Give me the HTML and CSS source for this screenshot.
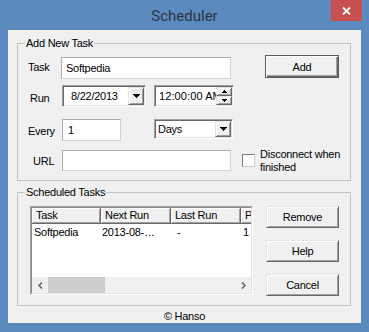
FILE: index.html
```html
<!DOCTYPE html>
<html>
<head>
<meta charset="utf-8">
<link rel="stylesheet" href="styles.css">
</head>
<body>
<div class="window">
  <div class="titlebar">
    <span class="title">Scheduler</span>
    <span class="close"><svg width="9" height="8" viewBox="0 0 9 8"><path d="M1 0.5 L8 7.5 M8 0.5 L1 7.5" stroke="#fff" stroke-width="1.8" fill="none"/></svg></span>
  </div>
  <div class="client">
    <fieldset class="group g1">
      <legend>Add New Task</legend>
      <div class="row r1">
        <span class="lbl l-task">Task</span>
        <div class="textbox tb-task">Softpedia</div>
        <div class="btn btn-default btn-add">Add</div>
      </div>
      <div class="row r2">
        <span class="lbl l-run">Run</span>
        <div class="sunken dtp">
          <span class="val v-date">8/22/2013</span>
          <span class="raised ddbtn"><svg width="7" height="4" viewBox="0 0 7 4"><path d="M0 0H7V1H6V2H5V3H4V4H3V3H2V2H1V1H0Z" fill="#000"/></svg></span>
        </div>
        <div class="sunken dtp time">
          <span class="val v-time">12:00:00 AM</span>
          <span class="spin">
            <span class="raised spinbtn"><svg width="5" height="3" viewBox="0 0 5 3"><path d="M2 0H3V1H4V2H5V3H0V2H1V1H2Z" fill="#000"/></svg></span>
            <span class="raised spinbtn"><svg width="5" height="3" viewBox="0 0 5 3"><path d="M0 0H5V1H4V2H3V3H2V2H1V1H0Z" fill="#000"/></svg></span>
          </span>
        </div>
      </div>
      <div class="row r3">
        <span class="lbl l-every">Every</span>
        <div class="textbox tb-every">1</div>
        <div class="sunken combo">
          <span class="val v-days">Days</span>
          <span class="raised ddbtn"><svg width="7" height="4" viewBox="0 0 7 4"><path d="M0 0H7V1H6V2H5V3H4V4H3V3H2V2H1V1H0Z" fill="#000"/></svg></span>
        </div>
      </div>
      <div class="row r4">
        <span class="lbl l-url">URL</span>
        <div class="textbox tb-url"></div>
        <span class="checkbox"></span>
        <span class="checklbl">Disconnect when<br>finished</span>
      </div>
    </fieldset>
    <fieldset class="group g2">
      <legend>Scheduled Tasks</legend>
      <div class="tasks">
        <div class="list">
          <div class="list-inner">
            <div class="lhead">
              <span class="hc c1">Task</span>
              <span class="hc c2">Next Run</span>
              <span class="hc c3">Last Run</span>
              <span class="hc c4">Period</span>
            </div>
            <div class="lbody">
              <div class="lrow">
                <span class="cell c1">Softpedia</span>
                <span class="cell c2 cnext">2013-08-…</span>
                <span class="cell c3 clast">-</span>
                <span class="cell c4">1</span>
              </div>
            </div>
            <div class="hscroll">
              <span class="sarrow"><svg width="5" height="7" viewBox="0 0 5 7"><polyline points="4,0.5 1,3.5 4,6.5" fill="none" stroke="#606060" stroke-width="1.5"/></svg></span>
              <span class="thumb"></span>
              <span class="track"></span>
              <span class="sarrow"><svg width="5" height="7" viewBox="0 0 5 7"><polyline points="1,0.5 4,3.5 1,6.5" fill="none" stroke="#606060" stroke-width="1.5"/></svg></span>
            </div>
          </div>
        </div>
        <div class="btncol">
          <div class="btn">Remove</div>
          <div class="btn">Help</div>
          <div class="btn">Cancel</div>
        </div>
      </div>
    </fieldset>
    <div class="footer">© Hanso</div>
  </div>
</div>
</body>
</html>
```
FILE: styles.css
```css
body {
  margin: 0;
  font-family: "Liberation Sans", Arial, sans-serif;
  font-size: 11px;
  letter-spacing: -0.25px;
  color: #000;
}
.window {
  width: 369px;
  height: 332px;
  background: #5b8bbe;
  display: flex;
  flex-direction: column;
}
.titlebar {
  height: 30px;
  display: grid;
  grid-template-columns: 1fr auto 1fr;
  align-items: start;
}
.title {
  grid-column: 2;
  font-family: Roboto, "Open Sans", sans-serif;
  font-size: 15px;
  letter-spacing: 0;
  line-height: 30px;
  padding-top: 1px;
  color: #2d3540;
}
.close {
  grid-column: 3;
  justify-self: end;
  margin-right: 7px;
  width: 31px;
  height: 21px;
  background: #c75050;
  display: flex;
  align-items: center;
  justify-content: center;
}
.client {
  margin: 0 8px;
  width: 353px;
  height: 293px;
  background: #f0f0f0;
  display: flex;
  flex-direction: column;
}
.group {
  margin: 7px 10px 0 9px;
  padding: 0 0 9px 7px;
  border: 1px solid #c4c4c4;
  min-width: 0;
}
.group legend {
  padding: 0 1px;
  font-size: 11px;
  line-height: 13px;
}
.g2 {
  margin-top: 5px;
  padding-bottom: 9px;
}
.row {
  display: flex;
  align-items: flex-start;
}
.lbl {
  line-height: 22px;
  flex: none;
}
.r1 { margin-top: 5px; }
.r2 { margin-top: 6px; }
.r3 { margin-top: 10px; }
.r4 { margin-top: 8px; height: 21px; }

.l-task { margin: 1px 0 0 3px; width: 33px; }
.l-run { margin: 2px 0 0 5px; width: 32px; }
.l-every { margin: 1px 0 0 3px; width: 34px; }
.l-url { margin: 0 0 0 8px; width: 29px; }

.textbox {
  box-sizing: border-box;
  height: 22px;
  background: #fff;
  border: 1px solid #acacac;
  border-right-color: #d4d4d4;
  border-bottom-color: #d4d4d4;
  padding-left: 4px;
  line-height: 20px;
  flex: none;
}
.tb-task { width: 170px; margin-top: 2px; }
.tb-every { width: 59px; padding-left: 5px; }
.tb-url { width: 169px; height: 21px; }

.raised {
  box-sizing: border-box;
  background: #f0f0f0;
  border: 1px solid;
  border-color: #e3e3e3 #696969 #696969 #e3e3e3;
  box-shadow: inset 1px 1px #fff, inset -1px -1px #a0a0a0;
}
.sunken {
  box-sizing: border-box;
  background: #fff;
  border: 1px solid;
  border-color: #a0a0a0 #fff #fff #a0a0a0;
  box-shadow: inset 1px 1px #696969, inset -1px -1px #e3e3e3;
  padding: 1px;
  display: flex;
  flex: none;
}
.dtp { width: 84px; height: 22px; }
.dtp.time { width: 80px; margin-left: 8px; }
.val {
  flex: 1;
  min-width: 0;
  overflow: hidden;
  white-space: nowrap;
  line-height: 18px;
}
.v-date { padding-left: 7px; }
.v-time { padding-left: 3px; letter-spacing: 0.1px; }
.v-days { padding-left: 2px; line-height: 16px; }
.ddbtn {
  width: 16px;
  flex: none;
  display: flex;
  align-items: center;
  justify-content: center;
}
.ddbtn svg, .spinbtn svg { display: block; }
.spin {
  width: 16px;
  flex: none;
  display: flex;
  flex-direction: column;
}
.spinbtn {
  flex: 1;
  display: flex;
  align-items: center;
  justify-content: center;
}
.combo { width: 79px; height: 20px; margin-left: 33px; }

.checkbox {
  flex: none;
  box-sizing: border-box;
  width: 13px;
  height: 13px;
  margin: 4px 0 0 11px;
  background: #fff;
  border: 1px solid;
  border-color: #7a7a7a #c8c8c8 #c8c8c8 #7a7a7a;
}
.checklbl {
  margin: -2px 0 0 5px;
  line-height: 13px;
  white-space: nowrap;
}

.btn {
  box-sizing: border-box;
  width: 73px;
  height: 22px;
  display: flex;
  align-items: center;
  justify-content: center;
  background: #f0f0f0;
  border: 1px solid;
  border-color: #e3e3e3 #696969 #696969 #e3e3e3;
  box-shadow: inset 1px 1px #fff, inset -1px -1px #a0a0a0;
  flex: none;
}
.btn-default {
  border-color: #5a5a5a;
  box-shadow: inset 1px 1px #fff, inset -1px -1px #696969, inset -2px -2px #a0a0a0;
}
.btn-add { width: 74px; height: 23px; margin-left: 34px; }

.tasks {
  display: flex;
  align-items: flex-start;
  margin-top: 7px;
}
.list {
  box-sizing: border-box;
  width: 223px;
  height: 89px;
  margin-left: 5px;
  border: 1px solid;
  border-color: #a0a0a0 #fff #fff #a0a0a0;
  background: #fff;
  display: flex;
  flex: none;
}
.list-inner {
  flex: 1;
  min-width: 0;
  border: 1px solid;
  border-color: #8c8c8c #e3e3e3 #e3e3e3 #8c8c8c;
  display: flex;
  flex-direction: column;
  overflow: hidden;
}
.lhead {
  display: flex;
  height: 16px;
  flex: none;
}
.hc {
  flex: none;
  box-sizing: border-box;
  height: 16px;
  padding-left: 4px;
  line-height: 15px;
  white-space: nowrap;
  overflow: hidden;
  background: #f0f0f0;
  border-right: 1px solid #696969;
  border-bottom: 1px solid #696969;
  box-shadow: inset 1px 1px #fff, inset -1px -1px #a0a0a0;
}
.c1 { width: 69px; }
.c2 { width: 70px; }
.c3 { width: 70px; }
.c4 { width: 40px; }
.lbody { flex: 1; }
.lrow {
  display: flex;
  height: 16px;
  line-height: 16px;
}
.cell {
  flex: none;
  box-sizing: border-box;
  padding-left: 2px;
  white-space: nowrap;
  overflow: hidden;
}
.cnext { padding-left: 1px; }
.clast { padding-left: 6px; }
.hscroll {
  height: 16px;
  flex: none;
  display: flex;
  background: #f0f0f0;
}
.sarrow {
  width: 16px;
  flex: none;
  display: flex;
  align-items: center;
  justify-content: center;
}
.thumb {
  width: 57px;
  flex: none;
  background: #cdcdcd;
}
.track { flex: 1; }
.btncol {
  margin-left: 13px;
  display: flex;
  flex-direction: column;
  gap: 12px;
}
.footer {
  height: 20px;
  line-height: 20px;
  text-align: center;
}
```
